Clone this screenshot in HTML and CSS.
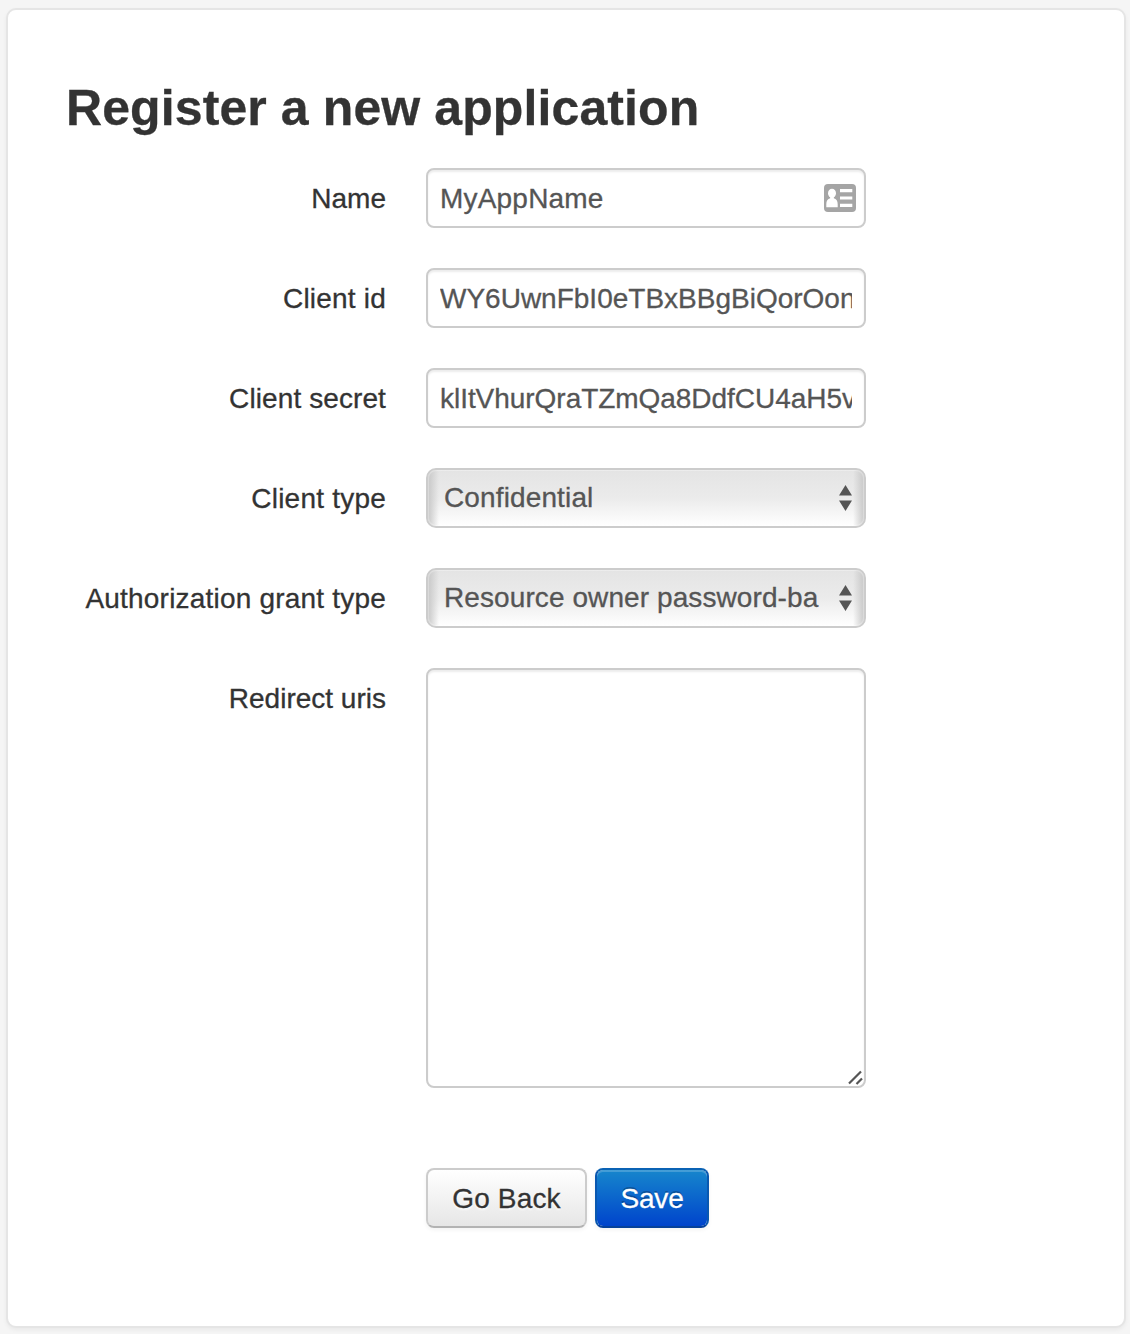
FILE: index.html
```html
<!DOCTYPE html>
<html lang="en">
<head>
<meta charset="utf-8">
<title>Register a new application</title>
<link rel="stylesheet" href="styles.css">
</head>
<body>
<main class="card">
  <h2 class="title">Register a new application</h2>
  <form class="form">
    <div class="row">
      <label class="label label-name">Name</label>
      <div class="control field">
        <span class="value value-name">MyAppName</span>
        <svg class="contact" width="32" height="28" viewBox="0 0 32 28">
          <rect width="32" height="28" rx="4" fill="#a5a5a5"/>
          <ellipse cx="8" cy="9.200" rx="4" ry="4.500" fill="#fff"/>
          <path d="M2.300 23.200v-3c0-3.200 1.300-5.200 3.900-6V12h3.600v2.200c2.600.8 3.900 2.800 3.900 6v3z" fill="#fff"/>
          <path d="M16 5h12.300v3.200H16zM16 12.400h12.300v3.200H16zM16 19.800h12.300V23H16z" fill="#fff"/>
        </svg>
      </div>
    </div>
    <div class="row">
      <label class="label label-id">Client id</label>
      <div class="control field"><span class="value value-id">WY6UwnFbI0eTBxBBgBiQorOon</span></div>
    </div>
    <div class="row">
      <label class="label label-secret">Client secret</label>
      <div class="control field"><span class="value value-secret">klItVhurQraTZmQa8DdfCU4aH5v</span></div>
    </div>
    <div class="row">
      <label class="label label-type">Client type</label>
      <div class="control select">
        <span class="value value-type">Confidential</span>
        <svg class="arrows" width="14" height="26" viewBox="0 0 14 26"><path d="M6.500 0L13 10.500H0zM6.500 26L0 15.500h13z" fill="#555"/></svg>
      </div>
    </div>
    <div class="row">
      <label class="label label-grant">Authorization grant type</label>
      <div class="control select">
        <span class="value value-grant">Resource owner password-ba</span>
        <svg class="arrows" width="14" height="26" viewBox="0 0 14 26"><path d="M6.500 0L13 10.500H0zM6.500 26L0 15.500h13z" fill="#555"/></svg>
      </div>
    </div>
    <div class="row">
      <label class="label label-uris">Redirect uris</label>
      <div class="control area">
        <svg class="grip" width="16" height="16" viewBox="0 0 16 16"><path d="M1 13.500L13 1.500M8.500 14l5.500-5.500" stroke="#555" stroke-width="2.200" fill="none"/></svg>
      </div>
    </div>
    <div class="actions">
      <button type="button" class="btn btn-back">Go Back</button>
      <button type="button" class="btn btn-save">Save</button>
    </div>
  </form>
</main>
</body>
</html>
```
FILE: styles.css
```css
* { box-sizing: border-box; }
body {
  margin: 0;
  padding: 8px 4px 0 6px;
  height: 1334px;
  overflow: hidden;
  background: #f5f5f5;
  color: #333;
  font: 28px/40px "Liberation Sans", Arial, sans-serif;
  -webkit-text-stroke: .3px currentColor;
}
.card {
  height: 1320px;
  padding: 58px;
  background: #fff;
  border: 2px solid #e5e5e5;
  border-radius: 10px;
  box-shadow: 0 2px 4px rgba(0, 0, 0, .05);
}
.title {
  margin: 0 0 20px;
  font-size: 50px;
  line-height: 80px;
  letter-spacing: .1px;
  white-space: nowrap;
}
.form { display: flex; flex-direction: column; gap: 40px; }
.row { display: flex; gap: 40px; }
.label {
  width: 320px;
  padding-top: 11px;
  text-align: right;
  white-space: nowrap;
}
.label-id { letter-spacing: .2px; }
.label-secret { letter-spacing: .1px; }
.label-type { letter-spacing: .22px; }
.label-grant { letter-spacing: .2px; }
.control {
  display: flex;
  align-items: center;
  width: 440px;
  height: 60px;
  border: 2px solid #ccc;
  border-radius: 8px;
  background: #fff;
  color: #555;
}
.field {
  padding: 0 12px;
  box-shadow: inset 0 2px 2px rgba(0, 0, 0, .075);
}
.value { flex: 1; overflow: hidden; white-space: nowrap; }
.field .value { padding-top: 2px; }
.value-name { letter-spacing: .2px; }
.value-secret { letter-spacing: -.04px; }
.value-type { letter-spacing: .13px; }
.value-grant { letter-spacing: .09px; }
.contact { flex: none; margin-right: -4px; }
.select {
  gap: 18px;
  padding: 0 11px 0 16px;
  border-radius: 10px;
  background:
    linear-gradient(to right, #c8c8c8, rgba(220, 220, 220, 0) 11px, rgba(220, 220, 220, 0) calc(100% - 11px), #c8c8c8),
    linear-gradient(#e4e4e4, #ebebeb 50%, #fff);
  background-clip: padding-box;
  box-shadow: inset 0 0 1px 1px rgba(255, 255, 255, .35);
}
.arrows { flex: none; }
.area {
  height: 420px;
  align-items: flex-end;
  justify-content: flex-end;
  box-shadow: inset 0 2px 2px rgba(0, 0, 0, .075);
}
.grip { display: block; }
.actions { display: flex; gap: 8px; padding: 40px 0 0 360px; }
.btn {
  height: 60px;
  padding: 1px 0 0;
  border: 2px solid #ccc;
  border-bottom-color: #b3b3b3;
  border-radius: 8px;
  font: inherit;
  color: #333;
}
.btn-back {
  width: 161px;
  background: linear-gradient(#fff, #e6e6e6) padding-box;
  letter-spacing: .15px;
  text-shadow: 0 2px 2px rgba(255, 255, 255, .75);
  box-shadow: inset 0 2px 0 rgba(255, 255, 255, .2), 0 2px 4px rgba(0, 0, 0, .05);
}
.btn-save {
  width: 114px;
  border-color: #0a62b4 #0a58b0 #06419a;
  background: linear-gradient(#1686cc, #04c) padding-box;
  color: #fff;
  letter-spacing: -.2px;
  text-shadow: 0 -2px 0 rgba(0, 0, 0, .25);
  box-shadow: inset 0 2px 0 rgba(255, 255, 255, .2), 0 2px 4px rgba(0, 0, 0, .05);
}
```
